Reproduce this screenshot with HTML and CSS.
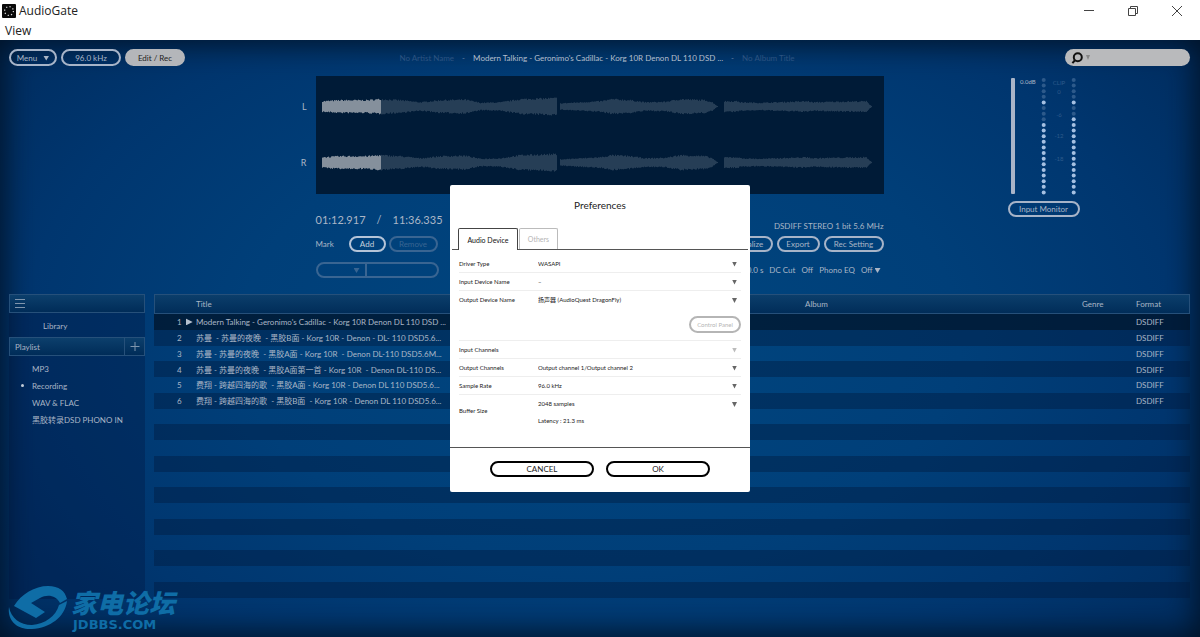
FILE: index.html
```html
<!DOCTYPE html>
<html lang="en">
<head>
<meta charset="utf-8">
<title>AudioGate</title>
<link rel="stylesheet" href="styles.css">
</head>
<body>
<header class="titlebar">
  <svg class="app-icon" viewBox="0 0 14 14" aria-hidden="true"><rect width="14" height="14" rx="1" fill="#0a0a0a"/><circle cx="7" cy="7" r="4.4" fill="none" stroke="#ddd" stroke-width="1.2" stroke-dasharray="1.2 2.25"/></svg>
  <h1 class="app-name">AudioGate</h1>
  <div class="window-controls">
    <button class="win-btn" aria-label="Minimize"><svg viewBox="0 0 12 12"><path d="M1 5.5h10"/></svg></button>
    <button class="win-btn" aria-label="Restore"><svg viewBox="0 0 12 12"><path d="M1.5 3.5h7v7h-7zM3.5 3.5v-2h7v7h-2"/></svg></button>
    <button class="win-btn" aria-label="Close"><svg viewBox="0 0 12 12"><path d="M1 1l10 10M11 1L1 11"/></svg></button>
  </div>
</header>
<nav class="menubar"><button class="menu-item">View</button></nav>
<main class="app">
  <div class="toolbar">
    <div class="toolbar-buttons">
      <button class="pill pill-menu">Menu <span class="caret"></span></button>
      <button class="pill pill-rate">96.0 kHz</button>
      <button class="pill pill-rate pill-on">Edit / Rec</button>
    </div>
    <div class="now-playing"><span class="dim">No Artist Name</span><span class="dash">-</span><span class="track-name">Modern Talking - Geronimo's Cadillac - Korg 10R Denon DL 110 DSD ...</span><span class="dash">-</span><span class="dim">No Album Title</span></div>
    <label class="search">
      <svg class="search-icon" viewBox="0 0 12 12" aria-hidden="true"><circle cx="6.8" cy="5.2" r="4" /><path d="M4.2 8L1.4 11.2"/></svg>
      <span class="caret caret-gray"></span>
      <input class="search-input" type="text" aria-label="Search">
    </label>
  </div>

  <section class="deck">
    <div class="channels"><span>L</span><span>R</span></div>
    <div class="wave"><svg id="wave" viewBox="0 0 568 118" aria-label="Waveform"></svg></div>
    <div class="meter-panel">
      <svg id="meter" class="meter" viewBox="0 0 72 118" aria-label="Level meter"></svg>
      <button class="pill pill-monitor">Input Monitor</button>
    </div>
    <div class="controls">
      <div class="control-left">
        <div class="time"><span>01:12.917</span><span>/</span><span>11:36.335</span></div>
        <div class="mark-row"><span class="mark-label">Mark</span><button class="pill pill-add">Add</button><button class="pill pill-remove" disabled>Remove</button></div>
        <div class="mark-box"><span class="mark-pick"><span class="caret"></span></span><span class="mark-name"></span></div>
      </div>
      <div class="control-right">
        <div class="format">DSDIFF STEREO 1 bit 5.6 MHz</div>
        <div class="action-row"><button class="pill pill-normalize">Normalize</button><button class="pill pill-export">Export</button><button class="pill pill-rec">Rec Setting</button></div>
        <div class="option-row"><span>0.0 s</span><span>DC Cut</span><span class="option-value">Off</span><span>Phono EQ</span><span class="option-value">Off <span class="caret"></span></span></div>
      </div>
    </div>
  </section>

  <section class="browser">
    <aside class="sidebar">
      <div class="bar"><button class="icon-btn" aria-label="List menu"><svg viewBox="0 0 10 9"><path d="M0 .5h10M0 4.5h10M0 8.5h10"/></svg></button></div>
      <a class="side-item side-library" href="#">Library</a>
      <div class="bar"><span class="bar-title">Playlist</span><button class="icon-btn add-btn" aria-label="Add playlist"><svg viewBox="0 0 9 9"><path d="M0 4.5h9M4.5 0v9"/></svg></button></div>
      <ul class="playlists">
        <li><a class="side-item" href="#">MP3</a></li>
        <li><a class="side-item current" href="#">Recording</a></li>
        <li><a class="side-item" href="#">WAV &amp; FLAC</a></li>
        <li><a class="side-item" href="#">黑胶转录DSD PHONO IN</a></li>
      </ul>
    </aside>
    <div class="tracks">
      <table class="track-table">
        <colgroup><col class="c-num"><col class="c-title"><col class="c-artist"><col class="c-album"><col class="c-genre"><col class="c-format"></colgroup>
        <thead><tr><th></th><th>Title</th><th></th><th>Album</th><th>Genre</th><th>Format</th></tr></thead>
        <tbody>
          <tr class="playing"><td class="num">1 <span class="play"></span></td><td>Modern Talking - Geronimo's Cadillac - Korg 10R Denon DL 110 DSD ...</td><td></td><td></td><td></td><td>DSDIFF</td></tr>
          <tr><td class="num">2</td><td>苏曼&nbsp; - 苏曼的夜晚&nbsp; - 黑胶B面 - Korg 10R - Denon - DL- 110 DSD5.6...</td><td></td><td></td><td></td><td>DSDIFF</td></tr>
          <tr><td class="num">3</td><td>苏曼 - 苏曼的夜晚&nbsp; - 黑胶A面 - Korg 10R&nbsp; - Denon DL-110 DSD5.6M...</td><td></td><td></td><td></td><td>DSDIFF</td></tr>
          <tr><td class="num">4</td><td>苏曼 - 苏曼的夜晚&nbsp; - 黑胶A面第一首 - Korg 10R&nbsp; - Denon DL-110 DS...</td><td></td><td></td><td></td><td>DSDIFF</td></tr>
          <tr><td class="num">5</td><td>费翔 - 跨越四海的歌&nbsp; - 黑胶A面 - Korg 10R - Denon DL 110 DSD5.6...</td><td></td><td></td><td></td><td>DSDIFF</td></tr>
          <tr><td class="num">6</td><td>费翔 - 跨越四海的歌&nbsp; - 黑胶B面&nbsp; - Korg 10R - Denon DL 110 DSD5.6...</td><td></td><td></td><td></td><td>DSDIFF</td></tr>
          <tr><td colspan="6"></td></tr><tr><td colspan="6"></td></tr><tr><td colspan="6"></td></tr><tr><td colspan="6"></td></tr>
          <tr><td colspan="6"></td></tr><tr><td colspan="6"></td></tr><tr><td colspan="6"></td></tr><tr><td colspan="6"></td></tr>
          <tr><td colspan="6"></td></tr><tr><td colspan="6"></td></tr><tr><td colspan="6"></td></tr><tr><td colspan="6"></td></tr>
        </tbody>
      </table>
    </div>
  </section>

  <div class="watermark">
    <svg class="watermark-logo" viewBox="0 0 60 46" aria-hidden="true">
      <path d="M6 21C13 9 27 1 40 1c11 0 17 5 19 13L52 18C48 10 39 9 32 13L23 18 37 27 28 33 6 21z"/>
      <path d="M1 22c-2 14 9 23 23 22 18-1 33-12 35-28l-8 4c-3 11-14 19-27 20C12 40 3 33 1 22z"/>
    </svg>
    <div class="watermark-text"><span class="watermark-name">家电论坛</span><span class="watermark-url">JDBBS.COM</span></div>
  </div>

  <div class="overlay">
    <section class="dialog" role="dialog" aria-labelledby="dialog-title">
      <h2 class="dialog-title" id="dialog-title">Preferences</h2>
      <div class="tabs" role="tablist"><button class="tab tab-active" role="tab" aria-selected="true">Audio Device</button><button class="tab" role="tab" aria-selected="false">Others</button></div>
      <div class="fields">
        <div class="field"><label for="driver">Driver Type</label><span class="pick"><select id="driver"><option>WASAPI</option></select></span></div>
        <div class="field"><label for="input-device">Input Device Name</label><span class="pick"><select id="input-device"><option>–</option></select></span></div>
        <div class="field field-plain"><label for="output-device">Output Device Name</label><span class="pick"><select id="output-device"><option>扬声器 (AudioQuest DragonFly)</option></select></span></div>
        <div class="panel-row"><button class="panel-btn" disabled>Control Panel</button></div>
        <div class="field"><label for="input-ch">Input Channels</label><span class="pick pick-off"><select id="input-ch" disabled><option></option></select></span></div>
        <div class="field"><label for="output-ch">Output Channels</label><span class="pick"><select id="output-ch"><option>Output channel 1/Output channel 2</option></select></span></div>
        <div class="field"><label for="rate">Sample Rate</label><span class="pick"><select id="rate"><option>96.0 kHz</option></select></span></div>
        <div class="field field-plain field-buffer"><label for="buffer">Buffer Size</label><div><span class="pick"><select id="buffer"><option>2048 samples</option></select></span><p class="latency">Latency : 21.3 ms</p></div></div>
      </div>
      <div class="dialog-actions"><button class="dialog-btn">CANCEL</button><button class="dialog-btn">OK</button></div>
    </section>
  </div>
</main>
<script src="script.js"></script>
</body>
</html>
```
FILE: styles.css
```css
* { box-sizing: border-box; }
body {
  margin: 0;
  min-height: 100vh;
  display: flex;
  flex-direction: column;
  background: #fff;
  font-family: Lato, "Noto Sans CJK SC", sans-serif;
  font-size: 8px;
  line-height: 12px;
}
button, input, select { font: inherit; color: inherit; margin: 0; padding: 0; border: 0; background: none; }
h1, h2, p, ul { margin: 0; padding: 0; font-weight: 400; list-style: none; }
a { color: inherit; text-decoration: none; }
svg { display: block; }

.titlebar { display: flex; align-items: center; height: 22px; padding-left: 2px; font-family: "Open Sans", sans-serif; color: #222; }
.app-icon { width: 14px; height: 14px; }
.app-name { margin-left: 3px; font-size: 12px; line-height: 20px; }
.window-controls { display: flex; gap: 32px; margin-left: auto; padding-right: 17px; }
.win-btn svg { width: 12px; height: 12px; fill: none; stroke: #444; stroke-width: 1; }
.menubar { height: 18px; padding-left: 5px; font-family: "Open Sans", sans-serif; font-size: 12px; color: #222; }
.menu-item { line-height: 18px; }

.app {
  position: relative;
  flex: 1;
  display: flex;
  flex-direction: column;
  padding: 9px 10px 0 9px;
  color: #aab6c6;
  background: radial-gradient(ellipse 60% 75% at 50% 50%, #00467f 0%, #003f79 50%, #00366f 80%, #002f63 100%);
  box-shadow: inset 0 0 30px 4px #001226;
}
.caret { display: inline-block; width: 6px; height: 5px; background: currentColor; clip-path: polygon(0 0, 100% 0, 50% 100%); }
.caret-gray { color: #888; width: 4px; }
.pill { height: 17px; border: 2px solid #a7b4c8; border-radius: 9px; text-align: center; line-height: 12px; white-space: nowrap; }

.toolbar { display: grid; grid-template-columns: 1fr auto 1fr; align-items: start; height: 18px; }
.toolbar-buttons { display: flex; gap: 4px; }
.pill-menu { width: 48px; }
.pill-menu .caret { margin-left: 4px; }
.pill-rate { width: 60px; }
.pill-on { background: #b4b6ba; border-color: #b4b6ba; color: #222; }
.now-playing { display: flex; gap: 8px; padding: 3px 5px 0 0; white-space: nowrap; }
.dim { color: #2c5381; }
.dash { color: #6482a5; }
.track-name { color: #b5bfcc; }
.search { justify-self: end; display: flex; align-items: center; gap: 3px; width: 125px; height: 17px; padding-left: 6px; border-radius: 9px; background: #b9babc; }
.search-icon { width: 12px; height: 12px; fill: none; stroke: #111; stroke-width: 2; }
.search-input { flex: 1; min-width: 0; height: 15px; outline: 0; color: #222; }

.deck { display: grid; grid-template-columns: 1fr 568px 1fr; grid-template-rows: 118px auto; margin-top: 9px; height: 218px; }
.channels { display: flex; flex-direction: column; gap: 44px; padding: 25px 9px 0 0; align-items: flex-end; font-size: 9px; }
.wave { background: #001b37; }
.meter-panel { grid-row: 1 / 3; grid-column: 3; padding-left: 124px; }
.meter { width: 72px; height: 118px; overflow: visible; }
.pill-monitor { width: 72px; height: 16px; margin-top: 7px; display: block; }
.controls { grid-column: 2; display: flex; justify-content: space-between; }
.control-left { padding-top: 18px; }
.time { display: flex; gap: 11px; font-size: 11px; line-height: 16px; }
.mark-row { display: flex; align-items: center; margin-top: 8px; }
.mark-label { width: 33px; }
.pill-add { width: 37px; height: 16px; margin-right: 3px; color: #c4cfdc; border-color: #b4c4d8; }
.pill-remove { width: 49px; height: 16px; border-color: #396592; color: #396592; }
.mark-box { display: flex; width: 123px; height: 16px; margin-top: 10px; border: 2px solid #396592; border-radius: 8px; color: #396592; }
.mark-pick { width: 49px; border-right: 2px solid #396592; text-align: right; padding-right: 5px; }
.control-right { display: flex; flex-direction: column; align-items: flex-end; padding-top: 26px; }
.action-row { display: flex; gap: 4px; margin-top: 4px; }
.action-row .pill { height: 16px; }
.pill-normalize { width: 54px; }
.pill-export { width: 43px; }
.pill-rec { width: 60px; }
.option-row { display: flex; gap: 6px; margin-top: 12px; padding-right: 3px; }

.browser { flex: 1; display: grid; grid-template-columns: 136px 1fr; gap: 9px; }
.sidebar { background: rgba(0, 20, 60, 0.32); margin-bottom: 38px; }
.bar { display: flex; align-items: center; height: 19px; padding-left: 5px; border: 1px solid #26507a; background: linear-gradient(#0c3f6c, #002c58); }
.icon-btn svg { width: 10px; height: 9px; fill: none; stroke: #7f95ad; stroke-width: 1; }
.add-btn { margin-left: auto; height: 17px; width: 20px; padding-left: 5px; border-left: 1px solid #26507a; }
.side-item { display: block; padding-left: 23px; line-height: 17px; }
.side-library { padding: 5px 0 2px 34px; }
.playlists { padding: 4px 0 0 0; }
.playlists .side-item { position: relative; line-height: 18px; height: 17px; }
.current::before { content: ""; position: absolute; left: 12px; top: 7px; width: 3px; height: 3px; border-radius: 50%; background: #c2ccd8; }

.track-table { width: 100%; height: 304px; border-collapse: collapse; table-layout: fixed; }
.c-num { width: 42px; }
.c-title { width: 258px; }
.c-artist { width: 351px; }
.c-genre { width: 54px; }
.c-format { width: 54px; }
.track-table th { height: 20px; padding: 0; text-align: left; font-weight: 400; }
.track-table thead tr { background: linear-gradient(#0c3f6c, #002c58); outline: 1px solid #26507a; outline-offset: -1px; }
.track-table td { height: 15px; padding: 1px 0 0; line-height: 12px; white-space: nowrap; }
.track-table tbody tr:nth-child(even) { background: rgba(0, 25, 60, 0.4); }
.track-table tbody .playing { background: rgba(0, 20, 42, 0.75); }
.track-table .num { padding-left: 23px; }
.play { display: inline-block; width: 7px; height: 7px; margin-left: 2px; background: #b5c0ce; clip-path: polygon(0 0, 100% 50%, 0 100%); }

.watermark { position: absolute; left: 8px; bottom: 6px; display: flex; gap: 3px; color: #0f6da6; }
.watermark-logo { width: 60px; height: 46px; fill: #0f6da6; }
.watermark-text { display: flex; flex-direction: column; justify-content: flex-end; gap: 4px; }
.watermark-name { font: italic 900 26px/26px "Noto Sans CJK SC", sans-serif; }
.watermark-url { font: 700 13px/12px "DejaVu Sans", sans-serif; padding-left: 2px; }

.overlay { position: absolute; inset: 0; display: flex; align-items: center; justify-content: center; }
.dialog { width: 300px; border-radius: 2px; background: #fff; color: #222; font-size: 6px; }
.dialog-title { padding-top: 12px; text-align: center; font-size: 10px; line-height: 16px; }
.tabs { display: flex; gap: 1px; margin: 15px 2px 0; padding-left: 6px; border-bottom: 1px solid #555; }
.tab { width: 39px; height: 21px; border: 1px solid #bbb; border-bottom: 0; border-radius: 2px 2px 0 0; color: #b5b5b5; font-size: 7px; }
.tab-active { width: 60px; margin-bottom: -1px; height: 22px; border-color: #444; color: #111; background: #fff; }
.fields { padding: 5px 9px 0; }
.field { display: grid; grid-template-columns: 79px 1fr; align-items: center; min-height: 18px; border-bottom: 1px solid #eee; }
.field-plain { border-bottom: 0; }
.pick { display: block; position: relative; }
.pick::after { content: ""; position: absolute; right: 4px; top: 4px; width: 5px; height: 5px; background: #666; clip-path: polygon(0 0, 100% 0, 50% 100%); pointer-events: none; }
.pick-off::after { background: #bbb; }
.pick select { display: block; width: 100%; height: 12px; appearance: none; opacity: 1; }
.panel-row { display: flex; justify-content: flex-end; padding: 7px 0; border-bottom: 1px solid #eee; }
.panel-btn { width: 52px; height: 17px; border: 2px solid #b5b5b5; border-radius: 9px; color: #b5b5b5; }
.latency { margin-top: 5px; }
.field-buffer { padding: 3px 0; }
.field-buffer label { padding-bottom: 4px; }
.dialog-actions { display: flex; justify-content: center; gap: 12px; margin-top: 17px; padding: 13px 0 15px; border-top: 1px solid #555; }
.dialog-btn { width: 104px; height: 16px; border: 2px solid #000; border-radius: 8px; font-size: 8px; line-height: 12px; }
```
FILE: script.js
```js
const NS = 'http://www.w3.org/2000/svg';
function add(parent, name, attrs, text) {
  const el = document.createElementNS(NS, name);
  for (const key in attrs) el.setAttribute(key, attrs[key]);
  if (text) el.textContent = text;
  parent.appendChild(el);
}

// [x, half height] pairs of the level envelope
const envelope = [[6,5],[24,6],[50,6],[64,7],[84,6],[104,4],[124,6],[149,6.5],[164,3.5],[184,4],[204,7],[240,8],[241,0],[243,0],[244,3],[264,4],[284,5],[296,7],[314,6],[329,4],[349,4.5],[364,7],[389,6],[396,4],[400,1],[402,0],[407,0],[408,5],[422,5],[424,4],[444,3.5],[474,4.5],[492,5],[496,4],[514,4.5],[550,5],[553,2],[556,0]];
function level(x) {
  for (let i = 1; i < envelope.length; i++) {
    const [x0, y0] = envelope[i - 1], [x1, y1] = envelope[i];
    if (x <= x1) return y0 + (y1 - y0) * (x - x0) / (x1 - x0);
  }
  return 0;
}
let seed = 7;
function noise() { seed = (seed * 16807) % 2147483647; return seed / 2147483647; }
function drawWave(svg, centre) {
  for (let x = 6; x < 556; x++) {
    const base = level(x);
    if (base <= 0) continue;
    const up = base * (0.9 + noise() * 0.25), down = base * (0.9 + noise() * 0.25);
    add(svg, 'rect', { x, y: centre - up, width: 1, height: up + down, fill: x < 65 ? '#85909c' : '#263e56' });
  }
}
const wave = document.getElementById('wave');
drawWave(wave, 30.5);
drawWave(wave, 86.5);

const meter = document.getElementById('meter');
add(meter, 'rect', { x: 3, y: 2, width: 4, height: 116, rx: 1, fill: '#a9b4c8' });
for (let i = 0; i < 21; i++) {
  const y = 4 + i * 5.62;
  add(meter, 'circle', { cx: 35.7, cy: y, r: 2, fill: i === 4 || i > 7 ? '#a5c0e2' : '#2d5a8b' });
  add(meter, 'circle', { cx: 65.7, cy: y, r: 2, fill: i === 4 || i > 6 ? '#a5c0e2' : '#2d5a8b' });
}
add(meter, 'text', { x: 12, y: 8, 'font-size': 6, fill: '#aab6c6' }, '0.0dB');
[['CLIP', 9], ['0', 18], ['-6', 41], ['-12', 62], ['-18', 85]].forEach(([label, y]) =>
  add(meter, 'text', { x: 51, y, 'font-size': 6, 'text-anchor': 'middle', fill: '#2d5a8b' }, label));
```
